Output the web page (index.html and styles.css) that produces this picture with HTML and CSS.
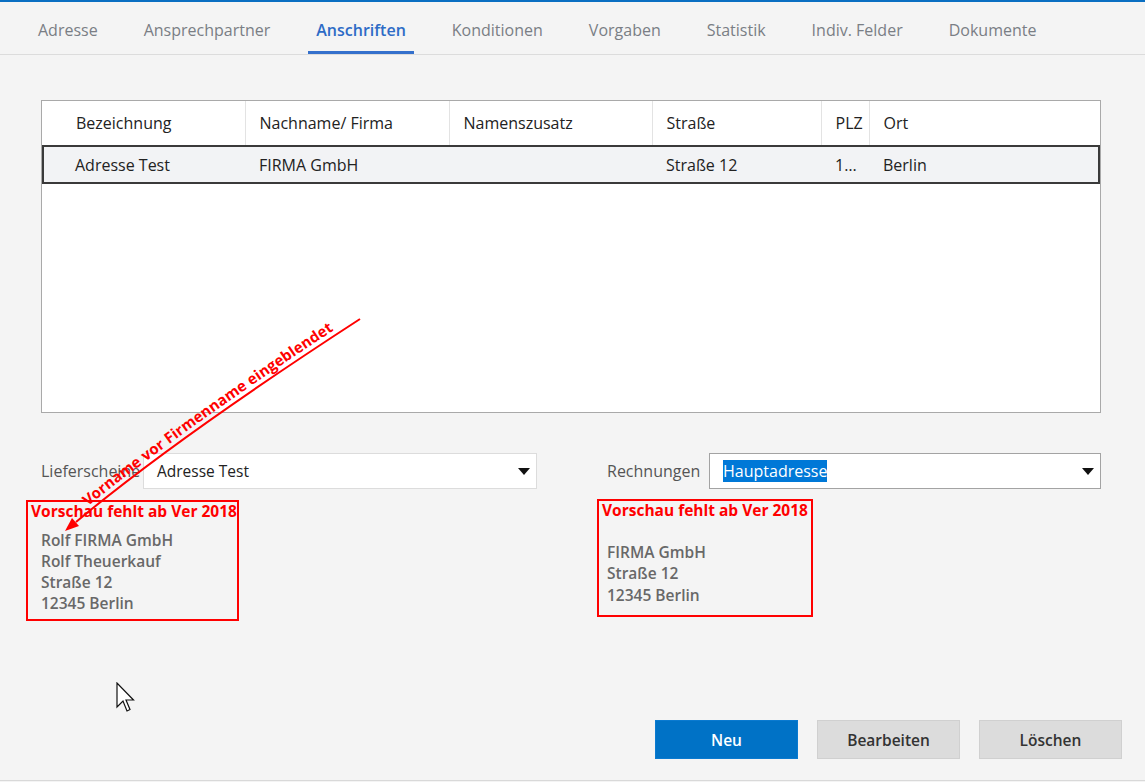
FILE: index.html
```html
<!DOCTYPE html>
<html lang="de">

<head>
    <meta charset="UTF-8">
    <meta name="viewport" content="width=device-width, initial-scale=1.0">
    <title>Anschriften</title>
    <link rel="stylesheet" href="styles.css">
</head>

<body>

    <div class="page">
        <nav class="tabs">
            <a class="tab">Adresse</a>
            <a class="tab">Ansprechpartner</a>
            <a class="tab active">Anschriften</a>
            <a class="tab">Konditionen</a>
            <a class="tab">Vorgaben</a>
            <a class="tab">Statistik</a>
            <a class="tab">Indiv. Felder</a>
            <a class="tab">Dokumente</a>
        </nav>

        <main class="content">
            <div class="grid-box">
                <table>
                    <colgroup>
                        <col class="col-bez">
                        <col class="col-name">
                        <col class="col-zusatz">
                        <col class="col-strasse">
                        <col class="col-plz">
                        <col>
                    </colgroup>
                    <thead>
                        <tr>
                            <th>Bezeichnung</th>
                            <th>Nachname/ Firma</th>
                            <th>Namenszusatz</th>
                            <th>Straße</th>
                            <th>PLZ</th>
                            <th>Ort</th>
                        </tr>
                    </thead>
                    <tbody>
                        <tr class="selected">
                            <td>Adresse Test</td>
                            <td>FIRMA GmbH</td>
                            <td></td>
                            <td>Straße 12</td>
                            <td>1…</td>
                            <td>Berlin</td>
                        </tr>
                    </tbody>
                </table>
            </div>

            <div class="assign">
                <div class="assign-col">
                    <div class="field">
                        <label>Lieferscheine</label>
                        <div class="select">
                            <span>Adresse Test</span>
                            <span class="caret"></span>
                        </div>
                    </div>
                    <div class="preview left">
                        <div class="preview-title">Vorschau fehlt ab Ver 2018</div>
                        <div class="address">
                            Rolf FIRMA GmbH<br>
                            Rolf Theuerkauf<br>
                            Straße 12<br>
                            12345 Berlin
                        </div>
                    </div>
                </div>

                <div class="assign-col">
                    <div class="field">
                        <label>Rechnungen</label>
                        <div class="select focus">
                            <span class="highlight">Hauptadresse</span>
                            <span class="caret"></span>
                        </div>
                    </div>
                    <div class="preview right">
                        <div class="preview-title">Vorschau fehlt ab Ver 2018</div>
                        <div class="address">
                            <br>
                            FIRMA GmbH<br>
                            Straße 12<br>
                            12345 Berlin
                        </div>
                    </div>
                </div>
            </div>
        </main>

        <footer class="actions">
            <button class="btn primary">Neu</button>
            <button class="btn">Bearbeiten</button>
            <button class="btn">Löschen</button>
        </footer>
    </div>

    <!-- Anmerkung (rot) -->
    <svg class="annotation" width="1145" height="782" viewBox="0 0 1145 782">
        <path d="M360,319 Q175,439 76,522" fill="none" stroke="#ff0000" stroke-width="2" />
        <polygon points="65,531 72,518 79,526" fill="#ff0000" />
        <path id="note-path" d="M60,529 Q170,437 357,315" fill="none" />
        <text class="note">
            <textPath href="#note-path" startOffset="36" textLength="303">Vorname vor Firmenname eingeblendet</textPath>
        </text>
    </svg>

    <svg class="cursor" width="20" height="32" viewBox="0 0 20 32">
        <path d="M1,1 L1,25 L7,19 L11,29 L14,27.5 L10,18 L17.5,18 Z" fill="#fff" stroke="#111" stroke-width="1.2" stroke-linejoin="miter" />
    </svg>

</body>

</html>
```

FILE: styles.css
```css
body {
    font-family: "Open Sans", "Noto Sans", sans-serif;
    background-color: #f4f4f4;
    color: #222;
    margin: 0;
    position: relative;
}

.page {
    height: 781px;
    box-sizing: border-box;
    border-top: 2px solid #0a6fc2;
    border-bottom: 1px solid #d9d9d9;
    display: flex;
    flex-direction: column;
}

/* Reiter */
.tabs {
    display: flex;
    gap: 30px;
    height: 53px;
    padding-left: 30px;
    box-sizing: border-box;
    border-bottom: 1px solid #dcdcdc;
}

.tab {
    height: 52px;
    box-sizing: border-box;
    padding: 17px 8px 0;
    border-bottom: 3px solid transparent;
    font-size: 16px;
    line-height: 22px;
    color: #7a7e85;
    cursor: pointer;
}

.tab.active {
    color: #2d6bc6;
    font-weight: 600;
    border-bottom-color: #3470cc;
}

.content {
    padding: 45px 44px 0 41px;
}

/* Tabelle */
.grid-box {
    height: 313px;
    box-sizing: border-box;
    border: 1px solid #a9a9a9;
    background-color: white;
}

table {
    width: 100%;
    border-collapse: collapse;
    table-layout: fixed;
    font-size: 16px;
}

.col-bez {
    width: 202px;
}

.col-name {
    width: 204px;
}

.col-zusatz {
    width: 203px;
}

.col-strasse {
    width: 169px;
}

.col-plz {
    width: 48px;
}

th {
    height: 44px;
    padding: 0 14px;
    text-align: left;
    font-weight: normal;
    border-left: 1px solid #e3e3e3;
}

th:first-child {
    border-left: none;
    padding-left: 33px;
}

td {
    height: 35px;
    padding: 0 14px;
    white-space: nowrap;
    overflow: hidden;
}

tr.selected td {
    background-color: #f2f3f5;
    border-top: 2px solid #3a3a3a;
    border-bottom: 2px solid #3a3a3a;
}

tr.selected td:first-child {
    border-left: 2px solid #3a3a3a;
    padding-left: 31px;
}

tr.selected td:last-child {
    border-right: 2px solid #3a3a3a;
}

/* Auswahl Anschriften */
.assign {
    display: grid;
    grid-template-columns: 496px 1fr;
    column-gap: 70px;
    margin-top: 40px;
}

.field {
    display: flex;
    align-items: center;
    height: 36px;
}

.field label {
    width: 102px;
    flex-shrink: 0;
    font-size: 16px;
    color: #555;
}

.select {
    flex: 1;
    height: 100%;
    box-sizing: border-box;
    display: flex;
    align-items: center;
    padding: 0 6px 0 13px;
    border: 1px solid #dcdcdc;
    background-color: white;
    font-size: 15.5px;
}

.select.focus {
    border-color: #a3a3a3;
}

.highlight {
    background-color: #0078d7;
    color: white;
    line-height: 22px;
    font-size: 16px;
}

.caret {
    margin-left: auto;
    width: 0;
    height: 0;
    border-left: 6px solid transparent;
    border-right: 6px solid transparent;
    border-top: 7px solid #111;
}

/* Vorschau (rot markiert) */
.preview {
    box-sizing: border-box;
    border: 2px solid #ff0000;
    padding-left: 3px;
    white-space: nowrap;
}

.preview.left {
    margin: 11px 0 0 -15px;
    width: 213px;
    height: 121px;
}

.preview.right {
    margin: 10px 0 0 -10px;
    width: 216px;
    height: 118px;
}

.preview-title {
    color: #ff0000;
    font-weight: bold;
    font-size: 15.5px;
    line-height: 19px;
}

.address {
    margin-top: 9px;
    padding-left: 10px;
    font-size: 15.5px;
    font-weight: 600;
    line-height: 21px;
    color: #686868;
}

.preview.right .address {
    margin-top: 0;
    padding-left: 5px;
    line-height: 21.5px;
}

/* Buttons */
.actions {
    margin-top: auto;
    display: flex;
    justify-content: flex-end;
    gap: 19px;
    padding: 0 23px 21px 0;
}

.btn {
    width: 143px;
    height: 39px;
    border: 1px solid #d0d0d0;
    background-color: #dcdcdc;
    color: #333;
    font-family: inherit;
    font-size: 15.5px;
    font-weight: 600;
    cursor: pointer;
}

.btn.primary {
    background-color: #0072c6;
    border-color: #0a7ad0;
    color: white;
}

.annotation {
    position: absolute;
    top: 0;
    left: 0;
    pointer-events: none;
}

.note {
    fill: #ff0000;
    font-family: "Open Sans", sans-serif;
    font-weight: bold;
    font-size: 15px;
}

.cursor {
    position: absolute;
    left: 116px;
    top: 682px;
    pointer-events: none;
}
```
